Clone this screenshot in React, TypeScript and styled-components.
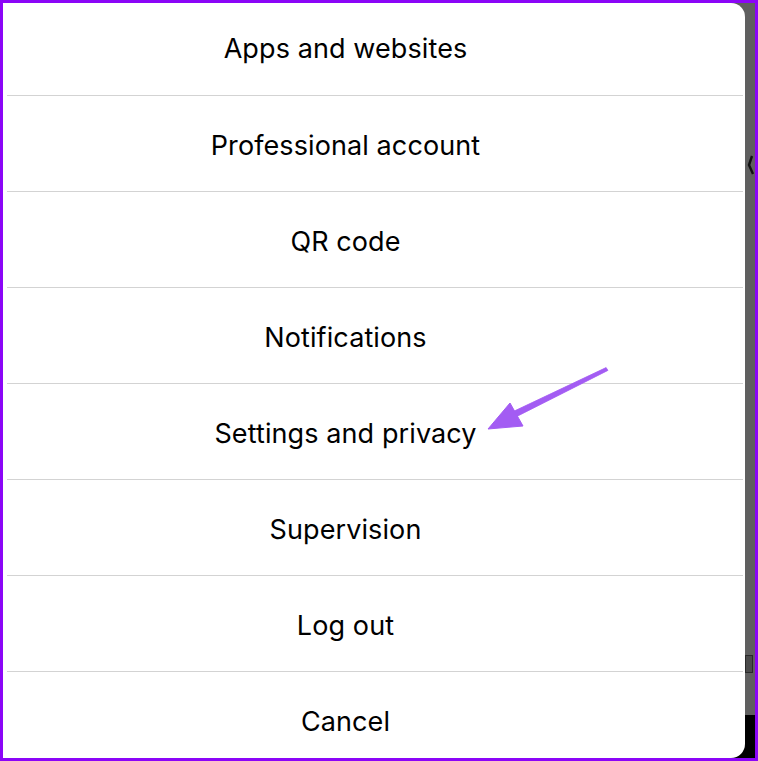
import styled, { createGlobalStyle } from "styled-components";

const items = [
    "Apps and websites",
    "Professional account",
    "QR code",
    "Notifications",
    "Settings and privacy",
    "Supervision",
    "Log out",
    "Cancel",
];

const GlobalStyle = createGlobalStyle`
    html, body {
        margin: 0;
        padding: 0;
        background: #ffffff;
    }
`;

const App = () => {
    return (
        <>
            <GlobalStyle />
            <Frame>
                <Sheet>
                    {items.map((label) => (
                        <Row key={label}>{label}</Row>
                    ))}
                    <Arrow width="130" height="72" viewBox="0 0 130 72">
                        <path
                            d="M124.9 7.4 L123.1 4.6 L30.7 48.3 L33.3 53.7 Z"
                            fill="#a35cf3"
                            stroke="#a35cf3"
                            strokeWidth="0.8"
                            strokeLinejoin="round"
                        />
                        <path d="M5 66 L27 40 L40 63 Z" fill="#a35cf3" stroke="#a35cf3" strokeWidth="1" strokeLinejoin="round" />
                    </Arrow>
                </Sheet>
                <Side>
                    <Chevron width="9" height="22" viewBox="0 0 9 22">
                        <path d="M6 2 L3 11 L7 20" stroke="#111" strokeWidth="2.4" fill="none" />
                    </Chevron>
                    <Badge />
                </Side>
            </Frame>
        </>
    );
};

export default App;

const Frame = styled.div`
    box-sizing: border-box;
    width: 758px;
    height: 761px;
    border: 3px solid #8b05f7;
    display: flex;
    background: linear-gradient(to bottom, #5f5f5f 0, #5f5f5f 712px, #000000 712px);
    overflow: hidden;
`;

const Sheet = styled.div`
    position: relative;
    width: 743px;
    height: 100%;
    background: #ffffff;
    border-radius: 0 14px 14px 0;
    display: flex;
    flex-direction: column;
    padding-left: 4px;
    padding-right: 2px;
    box-sizing: border-box;
    overflow: hidden;
`;

const Row = styled.div`
    flex: none;
    height: 96px;
    box-sizing: border-box;
    border-bottom: 1.5px solid #d3d3d3;
    display: flex;
    align-items: center;
    justify-content: center;
    padding-top: 3px;
    padding-right: 59px;

    font-family: Inter, "Liberation Sans", sans-serif;
    font-size: 27px;
    color: #000000;
    letter-spacing: 0.1px;

    &:first-child {
        height: 93px;
        padding-top: 0;
        padding-bottom: 2px;
    }

    &:last-of-type {
        border-bottom: none;
    }
`;

const Arrow = styled.svg`
    position: absolute;
    left: 480px;
    top: 360px;
`;

const Side = styled.div`
    flex: 1;
    display: flex;
    flex-direction: column;
`;

const Chevron = styled.svg`
    margin-top: 151px;
    margin-left: 1px;
`;

const Badge = styled.div`
    margin-top: 479px;
    width: 6px;
    height: 16px;
    border: 1px solid #2a2a2a;
    background: #4a4a4a;
`;
